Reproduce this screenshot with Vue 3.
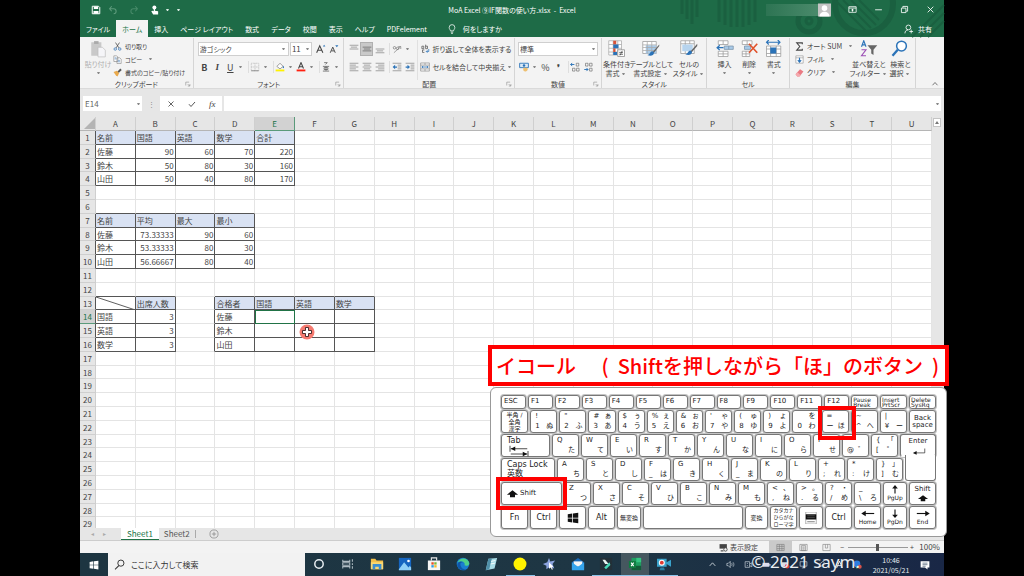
<script setup>
const icons = {
  save: '<path d="M2 2h10l2 2v10H2z" fill="none" stroke="#fff" stroke-width="1.6"/><path d="M4.500 2.500h7v4h-7zM4 9.500h8V14H4z" fill="#fff"/>',
  undo: '<path d="M6 2L2.500 6 6 10M3 6h6a4 4 0 0 1 0 8" fill="none" stroke="#5d9b7c" stroke-width="1.7"/>',
  redo: '<path d="M10 2l3.500 4L10 10M13 6H7a4 4 0 0 0 0 8" fill="none" stroke="#478a69" stroke-width="1.7"/>',
  touch: '<circle cx="7" cy="4" r="3.200" fill="#fff"/><path d="M6 4h2v5l5 1v5H5l-3-5 2-1 2 1z" fill="#fff"/>',
  bulb: '<path d="M5.500 11C5.500 9 3.500 8.500 3.500 5.500a4.500 4.500 0 0 1 9 0c0 3-2 3.500-2 5.500zM6 13h4M6.500 15h3" fill="none" stroke="#fff" stroke-width="1.200"/>',
  share: '<circle cx="7" cy="5.500" r="3.800" fill="none" stroke="#fff" stroke-width="1.300"/><path d="M1.500 15c0-3.500 2-5.500 5-5.500M11.500 9v6M8.500 12h6" fill="none" stroke="#fff" stroke-width="1.300"/>',
  ribbonOpt: '<path d="M1.500 3h13v10h-13zM1.500 5.500h13" fill="none" stroke="#fff" stroke-width="1.400"/><path d="M8 6.500l3 3H9v2H7v-2H5z" fill="#fff"/>',
  min: '<path d="M2 8.500h12" stroke="#fff" stroke-width="1.500"/>',
  restore: '<path d="M2.500 5.500h8v8h-8zM5 5V2.500h8.500V11H11" fill="none" stroke="#fff" stroke-width="1.500"/>',
  close: '<path d="M3 3l10 10M13 3L3 13" stroke="#fff" stroke-width="1.500"/>',
  paste: '<path d="M2 2h9v12H2z" fill="#c9c9c9"/><path d="M4.500 1h4v2.500h-4z" fill="#aaa"/><path d="M8 6.500h4l2.500 2.500v6H8z" fill="#f5f5f8" stroke="#bbb" stroke-width=".6"/>',
  cut: '<path d="M4.500 1l6 9.500M11.500 1l-6 9.500" stroke="#444" stroke-width="1.300"/><circle cx="4" cy="12.500" r="2.200" fill="none" stroke="#3b78b8" stroke-width="1.400"/><circle cx="12" cy="12.500" r="2.200" fill="none" stroke="#3b78b8" stroke-width="1.400"/>',
  copy: '<path d="M1.500 1.500h5l2 2v8h-7zM7 5h5l2.500 2.500V15H7z" fill="#fff" stroke="#777"/><path d="M3 5h3M3 7h3M8.500 9.500h4M8.500 12h4" stroke="#3b78b8"/>',
  brush: '<path d="M1 7l6-2 4 4-3 6-3-2z" fill="#e9a94b"/><path d="M8 6l5-5 2.500 2.500-5 5z" fill="#555"/>',
  grow: '<path d="M1 14L6 3l5 11M3 10h6" fill="none" stroke="#444" stroke-width="1.700"/><path d="M11 4l2-3 2 3z" fill="#2b73b8"/>',
  shrink: '<path d="M2 14L6 5l4 9M4 11h4" fill="none" stroke="#444" stroke-width="1.500"/><path d="M10 2h5l-2.500 3z" fill="#2b73b8"/>',
  border: '<path d="M2 2h12v12H2zM8 2v12M2 8h12" fill="none" stroke="#aaa" stroke-dasharray="1.500 1"/><path d="M2 14h12" stroke="#666"/>',
  bucket: '<path d="M3 7l5-5 5 5-5 4z" fill="#fff" stroke="#666"/><path d="M13 6c2 2 1.500 4 .5 4S12 8 13 6z" fill="#2b73b8"/><path d="M1 12h14v3H1z" fill="#fff200"/>',
  fontColor: '<path d="M4 10.500L8 1l4 9.500M5.500 7.500h5" fill="none" stroke="#444" stroke-width="1.700"/><path d="M1 12h14v3H1z" fill="#ff2010"/>',
  ruby: '<path d="M5 1h5L7 4M3 7h10M5 9h6v3H5zM3 14.500h10M8 7v7" fill="none" stroke="#555" stroke-width="1.200"/>',
  alTop: '<path d="M1 2h14M3 5h10M1 8h14" stroke="#888" stroke-width="1.200"/>',
  alMid: '<path d="M1 5h14M3 8h10M1 11h14" stroke="#666" stroke-width="1.200"/>',
  alBot: '<path d="M1 8h14M3 11h10M1 14h14" stroke="#888" stroke-width="1.200"/>',
  left: '<path d="M1 2h14M1 5h10M1 8h14M1 11h10M1 14h14" stroke="#888" stroke-width="1.200"/>',
  center: '<path d="M1 2h14M3 5h10M1 8h14M3 11h10M1 14h14" stroke="#888" stroke-width="1.200"/>',
  right: '<path d="M1 2h14M5 5h10M1 8h14M5 11h10M1 14h14" stroke="#888" stroke-width="1.200"/>',
  orient: '<path d="M3 14L14 4M10 4h4v4" fill="none" stroke="#888" stroke-width="1.200"/><circle cx="4" cy="6" r="2" fill="none" stroke="#666"/><circle cx="9" cy="7" r="2" fill="none" stroke="#666"/>',
  outdent: '<path d="M1 2h14M9 5h6M9 8h6M9 11h6M1 14h14" stroke="#888" stroke-width="1.200"/><path d="M1 8l4-3.500V7h3v2H5v2.500z" fill="#2b73b8"/>',
  indent: '<path d="M1 2h14M9 5h6M9 8h6M9 11h6M1 14h14" stroke="#888" stroke-width="1.200"/><path d="M8 8L4 4.500V7H1v2h3v2.500z" fill="#2b73b8"/>',
  wrap: '<path d="M3 3.500h3v4H3zM9 1v6.500h3v-4H9M7 9.500H4v4h3" fill="none" stroke="#555" stroke-width="1.200"/><path d="M14 8v4h-4l2-2m-2 2l2 2" fill="none" stroke="#2b73b8" stroke-width="1.200"/>',
  merge: '<path d="M1 1.500h14v13H1zM1 5h14M1 11h14M8 1.500V5M8 11v3.500" fill="none" stroke="#888"/><path d="M3 8h10M5 6.500L3 8l2 1.500M11 6.500L13 8l-2 1.500" fill="none" stroke="#2b73b8" stroke-width="1.200"/>',
  money: '<path d="M1 2h14v7H1z" fill="#dceaf6" stroke="#2b73b8" stroke-width="1.400"/><circle cx="8" cy="5.500" r="2" fill="#2b73b8"/><path d="M7 9h6c2 2 1 5-2 6-3 0-5-1-4-6z" fill="#eec071"/>',
  decInc: '<path d="M1 4h6M3.500 1.500L1 4l2.500 2.500" stroke="#2b73b8" fill="none" stroke-width="1.500"/><path d="M10 2h4v4.500h-4zM4 10h4v4.500H4zM10.500 10h4v4.500h-4z" fill="none" stroke="#666"/>',
  decDec: '<path d="M2 12h6M5.500 9.500L8 12l-2.500 2.500" stroke="#2b73b8" fill="none" stroke-width="1.500"/><path d="M4 2h4v4.500H4zM10.500 2h4v4.500h-4zM10.500 10h4v4.500h-4z" fill="none" stroke="#666"/>',
  cond: '<path d="M1 1h17v19H1zM1 6h17M1 11h17M1 16h17M7 1v19M13 1v19" fill="#fff" stroke="#aaa"/><path d="M7 1h4v5H7zM7 11h3v5H7z" fill="#d8543a"/><path d="M7 6h7v5H7zM7 16h5v4H7z" fill="#2b73b8"/><path d="M13 13h9v9h-9z" fill="#fff" stroke="#888"/><path d="M15 16.500h5M15 19h5M19 14.500l-3 6" stroke="#444"/>',
  tbl: '<path d="M1 2h18v16H1z" fill="#fff" stroke="#999"/><path d="M5 7h14v11H5z" fill="#a9cbe9"/><path d="M1 6.500h18M1 10h18M1 14h18M7 2v16M13 2v16" stroke="#aaa"/><path d="M23 6l-8 9-2 3 3-1 7-9z" fill="#666"/><path d="M14 15c-4 1-3 4-7 5 4 2 9 1 9-3z" fill="#2b73b8"/>',
  cellst: '<path d="M1 1h18v17H1zM1 5h18M7 1v17M13 1v4" fill="#fff" stroke="#999"/><path d="M3 6h14v9H3z" fill="#b7d4ee"/><path d="M23 5l-8 9-2 4 3-2 7-8z" fill="#666"/><path d="M14 14c-4 1-3 4-7 5 4 2 9 1 9-3z" fill="#2b73b8"/>',
  ins: '<path d="M3 1h13v5H3zM9.500 1v5M3 15h13v7H3zM9.500 15v7M3 18.500h13" fill="#fff" stroke="#999"/><path d="M11 8h12v4.500H11zM17 8v4.500" fill="#a9cbe9" stroke="#7b93a8"/><path d="M10 10.300H2M5 7l-3.500 3.300L5 13.500" fill="none" stroke="#2b73b8" stroke-width="1.700"/>',
  del: '<path d="M3 1h13v5H3zM9.500 1v5M3 15h10v7H3zM8 15v7M3 18.500h10" fill="#fff" stroke="#999"/><path d="M6 8h8v4.500H6z" fill="#a9cbe9" stroke="#7b93a8"/><path d="M12 5l11 12M23 5L12 17" stroke="#e0532c" stroke-width="2.200"/>',
  fmt: '<path d="M2 3h18M5 0L2 3l3 3M17 0l3 3-3 3" fill="none" stroke="#2b73b8" stroke-width="1.500"/><path d="M2 8h19v14H2zM7.500 8v14M15 8v14M2 12h19M2 18h19" fill="#fff" stroke="#999"/><path d="M7 10h8v8H7z" fill="#2b73b8"/>',
  sigma: '<path d="M13 4V1.500H3L8.500 8 3 14.500h10V12" fill="none" stroke="#444" stroke-width="1.900"/>',
  fill: '<path d="M1.500 1.500h13v13h-13zM1.500 5h13" fill="#fff" stroke="#888"/><path d="M8 5v7M5 9l3 3.500L11 9" fill="none" stroke="#2b73b8" stroke-width="2"/>',
  eraser: '<path d="M1 11L9 2l6 4-7 9H4z" fill="#ea7a83"/><path d="M1 11l3-3.500 6 5L8 15H4z" fill="#f5a9ae"/>',
  sort: '<path d="M2 9l3-8 3 8M3 6.500h4" fill="none" stroke="#2b73b8" stroke-width="1.500"/><path d="M2 13h6l-6 8h6" fill="none" stroke="#9b4fb5" stroke-width="1.500"/><path d="M10 7h13l-5 6v7l-3-2v-5z" fill="#666"/>',
  find: '<circle cx="14" cy="8" r="6.500" fill="#fff" stroke="#2b73b8" stroke-width="2"/><path d="M9 13l-7 8" stroke="#2b73b8" stroke-width="3"/>',
  cross: '<path d="M3 3l10 10M13 3L3 13" stroke="#555" stroke-width="1.800"/>',
  check: '<path d="M2 8.500l4 4.500 8-9" fill="none" stroke="#555" stroke-width="2"/>',
  launcher: '<path d="M2 12V3h9M7 8l5 5M13 8v5.500H7.500" fill="none" stroke="#777" stroke-width="1.300"/>',
  gear: '<path d="M1 2h13v8H1z" fill="#444"/><path d="M3 14h5" stroke="#444" stroke-width="2"/><circle cx="11.500" cy="11.500" r="3" fill="#f3f3f3" stroke="#444" stroke-width="1.500"/>',
  vNormal: '<path d="M1.500 2.500h13v11h-13zM1.500 6h13M1.500 10h13M6 2.500v11M10.500 2.500v11" fill="none" stroke="#777"/>',
  vPage: '<path d="M1.500 2.500h13v11h-13zM4.500 4.500h7v9h-7zM6 7h4M6 9h4M6 11h4" fill="none" stroke="#777"/>',
  vBreak: '<path d="M1.500 13.500v-11h13v11zM6 2.500V9h4V2.500" fill="none" stroke="#777"/>',
  win: '<path d="M1 3l6-1v5.600H1zM8 1.900L15 1v6.600H8zM1 8.500h6V14l-6-1zM8 8.500h7V15l-7-1z" fill="#fff"/>',
  winBlack: '<path d="M1 3l6-1v5.600H1zM8 1.900L15 1v6.600H8zM1 8.500h6V14l-6-1zM8 8.500h7V15l-7-1z" fill="#111"/>',
  mag: '<circle cx="10" cy="6" r="4.500" fill="none" stroke="#333" stroke-width="1.400"/><path d="M7 9.500L1.500 15" stroke="#333" stroke-width="1.500"/>',
  up: '<path d="M3 10.500L8 5l5 5.500" fill="none" stroke="currentColor" stroke-width="1.400"/>',
  speaker: '<path d="M1.500 6H4l3.500-3.500v11L4 10H1.500zM10 5.500c1 1.500 1 3.500 0 5M12.500 4c2 2.500 2 5.500 0 8" fill="none" stroke="#ccd5dc" stroke-width="1.200"/>',
  cam: '<path d="M2 3h8v10H2zM10 7l4-2v7l-4-2M5 6h2M5 10h2" fill="none" stroke="#ccd5dc" stroke-width="1.200"/>',
  batt: '<path d="M1 5h12v7H1z" fill="#dde"/><path d="M13 7h2v3h-2z" fill="#dde"/>',
  alert: '<path d="M1 4h11v8H1z" fill="#d8dce4"/><circle cx="11" cy="11" r="4" fill="#e23b3b"/>',
  net: '<path d="M2 3h12v8H2zM5 14h6M8 11v3" fill="none" stroke="#ccd5dc" stroke-width="1.200"/>',
  pen: '<path d="M3 13l2-6 6-5 2 3-5 6zM3 13l3-3" fill="none" stroke="#ccd5dc" stroke-width="1.200"/>',
  ime: '<path d="M3 14L8 2l5 12M4.500 10h7" fill="none" stroke="#fff" stroke-width="1.500"/>',
  globe: '<circle cx="7" cy="7" r="6" fill="#2d7de0"/><circle cx="12" cy="12" r="3.500" fill="#d9534a"/><path d="M5 11l5 3-4 1z" fill="#5bb85b"/>',
  note: '<path d="M1 2h14v10h-3v3l-4-3H1z" fill="#fff"/><path d="M4 5h8M4 7.500h8M4 10h5" stroke="#29405a"/>',
}
const apps = [
  '<circle cx="8" cy="8" r="4.800" fill="none" stroke="#e8eef2" stroke-width="1.700"/>',
  '<path d="M2 3v2h8V3M2 13v-2h8v2M2 6.500h8v3H2zM13 2.500v3M13 7v2M13 10.500v3" fill="none" stroke="#aebbc2" stroke-width="1.200"/>',
  '<path d="M1 2h5l1.500 2H15v10H1z" fill="#f4c04a"/><path d="M1 6h14v8H1z" fill="#fbd873"/><path d="M3 8h10v6h-3v-3H6v3H3z" fill="#3c8ed0"/>',
  '<path d="M1 1h14v14H1z" fill="#1565c0"/><path d="M1 14L7 6l5 6 1.500-2L15 12v3H1z" fill="#8fd0f7"/><circle cx="12" cy="4.500" r="1.500" fill="#fff"/>',
  '<path d="M5 4V1h6v3" fill="none" stroke="#e8e8e8" stroke-width="1.300"/><path d="M1 4h14v11H1z" fill="#f5f5f5"/><path d="M5 6h2.700v2.700H5z" fill="#e5502a"/><path d="M8.300 6H11v2.700H8.300z" fill="#7bb93a"/><path d="M5 9.300h2.700V12H5z" fill="#2f9de0"/><path d="M8.300 9.300H11V12H8.300z" fill="#f6b92c"/>',
  '<circle cx="8" cy="8" r="7.200" fill="#1a7fd0"/><path d="M2 6C4 0 14 0 15.200 7c0 3-4 3.500-5.500 2.500C11 7 8 4.500 5 5.500z" fill="#4ed08a"/><path d="M5 8c0 4 3 6.500 7 6.500C9 16 3 15 1.500 10 1 6 5 4 8 6 6 6 5 7 5 8z" fill="#0f57a8"/>',
  '<path d="M5 2l10-1-3 12-10 2z" fill="#a9dce6"/><path d="M5 2l4 0-3 12-4 1z" fill="#4f8fa8"/><path d="M8 5l5-1M7.500 8l5-1" stroke="#fff"/>',
  '<circle cx="8" cy="8" r="7.400" fill="#fff200"/>',
  '<path d="M8 1l1.500 4L15 4l-3 4 2 5-5-2-4 3v-4L1 8l5-2z" fill="#8da5e0"/><path d="M8 6l5 5-2 .3L12.500 14l-1.200.6L10 12l-2 1.500z" fill="#fff"/>',
  '<path d="M1 6l7-5 7 5v8H1z" fill="#1769b8"/><path d="M3 5h10v6H3z" fill="#f5f5f5"/><path d="M1 6l7 5 7-5v9H1z" fill="#35a4ec"/>',
  '<path d="M1 1h14v14H1z" fill="#233038"/><path d="M4 3h3l4 5H7z" fill="#e9f5f2"/><path d="M6 12l6-6 1 3-5 5z" fill="#49d8b8"/>',
  '<path d="M4 1h11v14H4z" fill="#1f9d60"/><path d="M9.500 1H15v5H9.500z" fill="#35c481"/><path d="M4 10h11v5H4z" fill="#135c38"/><path d="M1 4.500h8v8H1z" fill="#107c41"/><path d="M3.500 6.500l3 4M6.500 6.500l-3 4" stroke="#fff" stroke-width="1.200"/>',
  '<path d="M0 2h11v9H0zM11 6l5-3v8l-5-3z" fill="#3aa3cc"/><circle cx="5.500" cy="6.500" r="3.400" fill="#fff"/><circle cx="5.500" cy="6.500" r="2.200" fill="#e03a32"/><path d="M4 12h4l1 3H3z" fill="#2a7c9e"/>',
]
const menu = ['挿入', 'ページ レイアウト', '数式', 'データ', '校閲', '表示', 'ヘルプ', 'PDFelement']

const letters = 'ABCDEFGHIJKLMNOPQRSTU'.split('')
const texts = {
  1: ['名前', '国語', '英語', '数学', '合計'],
  2: ['佐藤', 90, 60, 70, 220],
  3: ['鈴木', 50, 80, 30, 160],
  4: ['山田', 50, 40, 80, 170],
  7: ['名前', '平均', '最大', '最小'],
  8: ['佐藤', 73.33333, 90, 60],
  9: ['鈴木', 53.33333, 80, 30],
  10: ['山田', 56.66667, 80, 40],
  13: ['', '出席人数', '', '合格者', '国語', '英語', '数学'],
  14: ['国語', 3, '', '佐藤'],
  15: ['英語', 3, '', '鈴木'],
  16: ['数学', 3, '', '山田'],
}
const boxes = [[1, 4, 0, 4], [7, 10, 0, 3], [13, 16, 0, 1], [13, 16, 3, 6]]
const boxed = (r, c) => boxes.some(([a, b, l, h]) => r >= a && r <= b && c >= l && c <= h)
const headRow = (r, c) => [1, 7, 13].includes(r) && boxed(r, c) && !(r === 13 && c === 0)
const rows = Array.from({ length: 29 }, (_, i) => {
  const r = i + 1
  return {
    r,
    headCls: { cur: r === 14, dr: boxed(r, 0) },
    cells: letters.map((_, c) => {
      const v = (texts[r] || [])[c] ?? ''
      return {
        v,
        cls: {
          num: typeof v === 'number',
          hd: headRow(r, c),
          dr: boxed(r, c) || boxed(r, c + 1),
          db: boxed(r, c) || boxed(r + 1, c),
          active: r === 14 && c === 4,
          diag: r === 13 && c === 0,
        },
      }
    }),
  }
})

const k = (w, ...t) => ({ w, t })
const l = (a, d) => k(27, a, '', '', d)
const fk = n => ({ w: 25, lab: n, c: 'fn' })
const keyRows = [
  [fk('ESC'), ...Array.from({ length: 12 }, (_, i) => fk('F' + (i + 1))),
    { w: 27, lab: 'Pause\nBreak', c: 'fn two' }, { w: 27, lab: 'Insert\nPrtScr', c: 'fn two' }, { w: 27, lab: 'Delete\nSysRq', c: 'fn two' }],
  [{ w: 27, lab: '半角 /\n全角\n漢字', c: 'jp' }, k(27, '!', '', '1', 'ぬ'), k(27, '"', '', '2', 'ふ'), k(27, '#', 'ぁ', '3', 'あ'),
    k(27, '$', 'ぅ', '4', 'う'), k(27, '%', 'ぇ', '5', 'え'), k(27, '&', 'ぉ', '6', 'お'), k(27, "'", 'ゃ', '7', 'や'),
    k(27, '(', 'ゅ', '8', 'ゆ'), k(27, ')', 'ょ', '9', 'よ'), k(27, '', 'を', '0', 'わ'), { ...k(27, '=', '', 'ー', 'ほ'), c: 'mark eq' },
    k(27, '~', '', '^', 'へ'), k(27, '|', '', '¥', 'ー'), { w: 27, lab: 'Back\nspace', c: 'mid2' }],
  [{ w: 49, lab: 'Tab', c: 'word', art: 'tab' }, l('Q', 'た'), l('W', 'て'), l('E', 'い'), l('R', 'す'), l('T', 'か'), l('Y', 'ん'),
    l('U', 'な'), l('I', 'に'), l('O', 'ら'), l('P', 'せ'), k(27, '', '', '@', '゛'), k(27, '{', '「', '[', '゜'), { w: 36, lab: 'Enter', c: 'enterTop', art: 'enter' }],
  [{ w: 54, lab: 'Caps Lock\n英数', c: 'word caps' }, l('A', 'ち'), l('S', 'と'), l('D', 'し'), k(27, 'F', '', '_', 'は'), l('G', 'き'), l('H', 'く'),
    k(27, 'J', '', '_', 'ま'), l('K', 'の'), l('L', 'り'), k(27, '+', '', ';', 'れ'), k(27, '*', '', ':', 'け'), k(27, '}', '」', ']', 'む'), { w: 31, lab: '', c: 'enterBot' }],
  [{ w: 61, lab: 'Shift', c: 'mark shift', art: 'shift' }, l('Z', 'つ'), l('X', 'さ'), l('C', 'そ'), l('V', 'ひ'), l('B', 'こ'), l('N', 'み'), l('M', 'も'),
    k(27, '<', '、', ',', 'ね'), k(27, '>', '。', '.', 'る'), k(27, '?', '・', '/', 'め'), k(27, '_', '', '\\', 'ろ'),
    { w: 24, lab: 'PgUp', c: 'nav', art: 'aup' }, { w: 27, lab: 'Shift', c: 'shiftR', art: 'shift' }],
  [{ w: 27, lab: 'Fn', c: 'mid' }, { w: 27, lab: 'Ctrl', c: 'mid' }, { w: 27, lab: '', c: 'mid', art: 'win' }, { w: 27, lab: 'Alt', c: 'mid' },
    { w: 24, lab: '無変換', c: 'jp' }, { w: 100, lab: '', c: 'mid' }, { w: 23, lab: '変換', c: 'jp' }, { w: 27, lab: 'カタカナ\nひらがな\nローマ字', c: 'jp tiny' },
    { w: 24, lab: '', c: 'mid', art: 'menu' }, { w: 27, lab: 'Ctrl', c: 'mid' }, { w: 27, lab: 'Home', c: 'nav', art: 'aleft' },
    { w: 24, lab: 'PgDn', c: 'nav', art: 'adown' }, { w: 27, lab: 'End', c: 'nav', art: 'aright' }],
]
const art = {
  tab: '<path d="M0 1v8M1 5h22M24 8v7M1 12h22" stroke="#111" fill="none"/><path d="M1 5l6-3v6zM23 12l-6-3v6z" fill="#111"/>',
  enter: '<path d="M22 4v7H6" stroke="#111" fill="none"/><path d="M3 11l6-3v6z" fill="#111"/>',
  shift: '<path d="M12 2l9 7h-5v4H8V9H3z" fill="#111"/>',
  aup: '<path d="M12 15V3" stroke="#111" stroke-width="2"/><path d="M7 6l5-6 5 6z" fill="#111"/>',
  adown: '<path d="M12 1v12" stroke="#111" stroke-width="2"/><path d="M7 10l5 6 5-6z" fill="#111"/>',
  aleft: '<path d="M4 8h19" stroke="#111" stroke-width="2"/><path d="M8 3L0 8l8 5z" fill="#111"/>',
  aright: '<path d="M1 8h19" stroke="#111" stroke-width="2"/><path d="M16 3l8 5-8 5z" fill="#111"/>',
  win: '<g transform="translate(4 0)">' + icons.winBlack + '</g>',
  menu: '<path d="M5 0h14v16H5z" fill="#fff" stroke="#999"/><path d="M5 3h14v7H5z" fill="#111"/><path d="M7 5h10M7 7.500h10" stroke="#888" stroke-width=".6"/><path d="M7 13h10" stroke="#555"/>',
}
</script>

<template>
  <div class="stage">
    <main class="excel">
      <header class="top">
        <svg class="decor" viewBox="0 0 260 37">
          <g stroke="#1a6040" fill="none">
            <path d="M-2 0v14M3 0v19M8 0v24M13 0v17M35 0v22M41 0v25M47 0v27M53 0v27M59 0v27M65 0v25M71 0v22" stroke-width="3" />
            <circle cx="125" cy="21" r="11" stroke-width="5" /><circle cx="125" cy="21" r="3" stroke-width="3" />
            <circle cx="180" cy="4" r="29" stroke-width="6" />
            <path d="M151 0l31 31M159 0l28 28M167 0l25 25M175 0l20 20M228 37l32-32M236 37l24-24M244 37l16-16" stroke-width="2" />
          </g>
        </svg>
        <div class="title">
          <div class="qat">
            <button aria-label="上書き保存"><svg viewBox="0 0 16 16" v-html="icons.save" /></button>
            <button aria-label="元に戻す"><svg viewBox="0 0 16 16" v-html="icons.undo" /></button>
            <button aria-label="やり直し"><svg viewBox="0 0 16 16" v-html="icons.redo" /></button>
            <button aria-label="タッチ"><svg viewBox="0 0 16 16" v-html="icons.touch" /></button>
            <i class="car lt" /><i class="car lt" />
          </div>
          <div class="name">MoA Excel ⑨IF関数の使い方.xlsx&nbsp; -&nbsp; Excel</div>
          <div class="wctl">
            <span class="user" />
            <svg class="avatar" viewBox="0 0 14 14"><path d="M0 0h14v14H0z" fill="#c4c4c4" /><circle cx="7" cy="5" r="3" fill="#fff" /><path d="M1.500 14c0-7 11-7 11 0z" fill="#fff" /></svg>
            <button v-for="n in ['ribbonOpt', 'min', 'restore', 'close']" :key="n" :aria-label="n"><svg viewBox="0 0 16 16" v-html="icons[n]" /></button>
          </div>
        </div>
        <nav class="tabs">
          <button>ファイル</button>
          <button class="on">ホーム</button>
          <button v-for="m in menu" :key="m">{{ m }}</button>
          <button class="tell"><svg viewBox="0 0 16 16" v-html="icons.bulb" />何をしますか</button>
          <button class="share"><svg viewBox="0 0 16 16" v-html="icons.share" />共有</button>
        </nav>
      </header>

      <section class="ribbon">
        <div class="grp clip">
          <div class="body">
            <button class="big dim"><svg viewBox="0 0 16 16" v-html="icons.paste" /><span>貼り付け</span><i class="car" /></button>
            <div class="stack">
              <button><svg viewBox="0 0 16 16" v-html="icons.cut" />切り取り</button>
              <button><svg viewBox="0 0 16 16" v-html="icons.copy" />コピー<i class="car" /></button>
              <button><svg viewBox="0 0 16 16" v-html="icons.brush" />書式のコピー/貼り付け</button>
            </div>
          </div>
          <div class="cap">クリップボード<svg viewBox="0 0 16 16" v-html="icons.launcher" /></div>
        </div>
        <div class="grp font">
          <div class="body col">
            <div class="line">
              <span class="sel wide"><select aria-label="フォント"><option>游ゴシック</option></select><i class="car" /></span>
              <span class="sel size"><select aria-label="サイズ"><option>11</option></select><i class="car" /></span>
              <button class="sq" aria-label="拡大"><svg viewBox="0 0 16 16" v-html="icons.grow" /></button>
              <button class="sq" aria-label="縮小"><svg viewBox="0 0 16 16" v-html="icons.shrink" /></button>
            </div>
            <div class="line">
              <button class="sq"><b>B</b></button><button class="sq"><em>I</em></button><button class="sq"><u>U</u></button><i class="car" /><i class="sep" />
              <button class="sq" aria-label="罫線"><svg viewBox="0 0 16 16" v-html="icons.border" /></button><i class="car" /><i class="sep" />
              <button class="sq" aria-label="塗りつぶし"><svg viewBox="0 0 16 16" v-html="icons.bucket" /></button><i class="car" />
              <button class="sq" aria-label="文字色"><svg viewBox="0 0 16 16" v-html="icons.fontColor" /></button><i class="car" /><i class="sep" />
              <button class="sq" aria-label="ふりがな"><svg viewBox="0 0 16 16" v-html="icons.ruby" /></button><i class="car" />
            </div>
          </div>
          <div class="cap">フォント<svg viewBox="0 0 16 16" v-html="icons.launcher" /></div>
        </div>
        <div class="grp align">
          <div class="body">
            <div class="col left">
              <div class="line">
                <button class="sq" aria-label="上揃え"><svg viewBox="0 0 16 16" v-html="icons.alTop" /></button>
                <button class="sq sel-on" aria-label="上下中央"><svg viewBox="0 0 16 16" v-html="icons.alMid" /></button>
                <button class="sq" aria-label="下揃え"><svg viewBox="0 0 16 16" v-html="icons.alBot" /></button><i class="sep" />
                <button class="sq" aria-label="方向"><svg viewBox="0 0 16 16" v-html="icons.orient" /></button><i class="car" />
              </div>
              <div class="line">
                <button v-for="n in ['left', 'center', 'right']" :key="n" class="sq" :aria-label="n"><svg viewBox="0 0 16 16" v-html="icons[n]" /></button><i class="sep" />
                <button v-for="n in ['outdent', 'indent']" :key="n" class="sq" :aria-label="n"><svg viewBox="0 0 16 16" v-html="icons[n]" /></button>
              </div>
            </div>
            <div class="col rest">
              <div class="line"><button class="txt"><svg viewBox="0 0 16 16" v-html="icons.wrap" />折り返して全体を表示する</button></div>
              <div class="line"><button class="txt"><svg viewBox="0 0 16 16" v-html="icons.merge" />セルを結合して中央揃え</button><i class="car" /></div>
            </div>
          </div>
          <div class="cap">配置<svg viewBox="0 0 16 16" v-html="icons.launcher" /></div>
        </div>
        <div class="grp number">
          <div class="body col">
            <div class="line"><span class="sel full"><select aria-label="表示形式"><option>標準</option></select><i class="car" /></span></div>
            <div class="line">
              <button class="sq" aria-label="通貨"><svg viewBox="0 0 16 16" v-html="icons.money" /></button><i class="car" />
              <button class="sq">%</button><button class="sq"><b>❜</b></button><i class="sep" />
              <button class="sq" aria-label="桁増"><svg viewBox="0 0 16 16" v-html="icons.decInc" /></button>
              <button class="sq" aria-label="桁減"><svg viewBox="0 0 16 16" v-html="icons.decDec" /></button>
            </div>
          </div>
          <div class="cap">数値<svg viewBox="0 0 16 16" v-html="icons.launcher" /></div>
        </div>
        <div class="grp style">
          <div class="body">
            <button class="big"><svg viewBox="0 0 24 24" v-html="icons.cond" /><span>条件付き</span><span>書式<i class="car" /></span></button>
            <button class="big"><svg viewBox="0 0 24 24" v-html="icons.tbl" /><span>テーブルとして</span><span>書式設定<i class="car" /></span></button>
            <button class="big"><svg viewBox="0 0 24 24" v-html="icons.cellst" /><span>セルの</span><span>スタイル<i class="car" /></span></button>
          </div>
          <div class="cap">スタイル</div>
        </div>
        <div class="grp cell">
          <div class="body">
            <button class="big"><svg viewBox="0 0 24 24" v-html="icons.ins" /><span>挿入</span><i class="car" /></button>
            <button class="big"><svg viewBox="0 0 24 24" v-html="icons.del" /><span>削除</span><i class="car" /></button>
            <button class="big"><svg viewBox="0 0 24 24" v-html="icons.fmt" /><span>書式</span><i class="car" /></button>
          </div>
          <div class="cap">セル</div>
        </div>
        <div class="grp edit">
          <div class="body">
            <div class="stack">
              <button><svg viewBox="0 0 16 16" v-html="icons.sigma" />オート SUM<i class="car" /></button>
              <button><svg viewBox="0 0 16 16" v-html="icons.fill" />フィル<i class="car" /></button>
              <button><svg viewBox="0 0 16 16" v-html="icons.eraser" />クリア<i class="car" /></button>
            </div>
            <button class="big"><svg viewBox="0 0 24 24" v-html="icons.sort" /><span>並べ替えと</span><span>フィルター<i class="car" /></span></button>
            <button class="big"><svg viewBox="0 0 24 24" v-html="icons.find" /><span>検索と</span><span>選択<i class="car" /></span></button>
          </div>
          <div class="cap">編集</div>
        </div>
        <button class="collapse" aria-label="折りたたむ"><svg viewBox="0 0 16 16" v-html="icons.up" /></button>
      </section>

      <section class="fbar">
        <span class="nbox"><input aria-label="名前ボックス" value="E14"><i class="car" /></span>
        <span class="dots">⋮</span>
        <span class="fbtn">
          <button aria-label="取消"><svg viewBox="0 0 16 16" v-html="icons.cross" /></button>
          <button aria-label="入力"><svg viewBox="0 0 16 16" v-html="icons.check" /></button>
          <button class="fx">fx</button>
        </span>
        <span class="formula"><input aria-label="数式"><i class="car" /></span>
      </section>

      <section class="sheet">
        <table>
          <thead>
            <tr>
              <th class="corner"><svg viewBox="0 0 10 10"><path d="M10 0v10H0z" fill="#b4b4b4" /></svg></th>
              <th v-for="(c, i) in letters" :key="c" :class="{ cur: i === 4 }">{{ c }}</th>
            </tr>
          </thead>
          <tbody>
            <tr v-for="row in rows" :key="row.r">
              <th :class="row.headCls">{{ row.r }}</th>
              <td v-for="(c, i) in row.cells" :key="i" :class="c.cls">{{ c.v }}<svg v-if="c.cls.diag" viewBox="0 0 40 14" preserveAspectRatio="none"><path d="M0 0l40 14" stroke="#555" stroke-width="1" /></svg></td>
            </tr>
          </tbody>
        </table>
        <div class="vscroll"><i /></div>
        <svg class="pointer" viewBox="0 0 16 16"><circle cx="8" cy="8" r="7.500" fill="#f57a70" /><path d="M6.500 3.500h3v3h3v3h-3v3h-3v-3h-3v-3h3z" fill="#fff" stroke="#3a2020" stroke-width=".9" /></svg>
      </section>

      <section class="stabs">
        <span class="arr">◂</span><span class="arr">▸</span>
        <button class="on">Sheet1</button><button>Sheet2</button><i class="bar" />
        <button class="add" aria-label="シート追加"><svg viewBox="0 0 16 16"><circle cx="8" cy="8" r="6.500" fill="none" stroke="#777" /><path d="M8 4.500v7M4.500 8h7" stroke="#777" /></svg></button>
      </section>

      <section class="status">
        <button class="disp"><svg viewBox="0 0 16 16" v-html="icons.gear" />表示設定</button>
        <button class="view on" aria-label="標準"><svg viewBox="0 0 16 16" v-html="icons.vNormal" /></button>
        <button class="view" aria-label="ページレイアウト"><svg viewBox="0 0 16 16" v-html="icons.vPage" /></button>
        <button class="view" aria-label="改ページ"><svg viewBox="0 0 16 16" v-html="icons.vBreak" /></button>
        <button class="minus">−</button><input type="range" aria-label="ズーム" min="0" max="100" value="49"><button>+</button>
        <span class="pct">100%</span>
      </section>

      <footer class="task">
        <button class="start" aria-label="スタート"><svg viewBox="0 0 16 16" v-html="icons.win" /></button>
        <label class="search"><svg viewBox="0 0 16 16" v-html="icons.mag" /><input placeholder="ここに入力して検索" aria-label="検索"></label>
        <div class="apps">
          <button v-for="(a, i) in apps" :key="i" :class="{ run: [7, 10, 11, 12].includes(i), act: i === 11 }" :aria-label="'アプリ' + (i + 1)"><svg viewBox="0 0 16 16" v-html="a" /></button>
        </div>
        <div class="tray">
          <svg v-for="n in ['up', 'speaker', 'cam', 'batt', 'alert', 'net', 'pen', 'ime', 'globe']" :key="n" viewBox="0 0 16 16" v-html="icons[n]" />
          <span class="water">© 2021 saym.</span>
        </div>
        <div class="clock"><span>10:46</span><span>2021/05/21</span></div>
        <button class="note" aria-label="通知"><svg viewBox="0 0 16 16" v-html="icons.note" /></button>
      </footer>
    </main>

    <aside class="over">
      <p class="banner"><span>イコール</span><span>(&nbsp; Shiftを押しながら「ほ」のボタン&nbsp; )</span></p>
      <div class="kb">
        <div v-for="(r, i) in keyRows" :key="i" class="krow" :class="{ first: i === 0 }">
          <div v-for="(key, j) in r" :key="j" class="key" :class="key.c" :style="{ flexGrow: key.w, flexBasis: key.w + 'px' }">
            <template v-if="key.t"><span v-for="(t, n) in key.t" :key="n" :class="'p' + n">{{ t }}</span></template>
            <template v-else><span v-if="key.lab" class="lab">{{ key.lab }}</span><svg v-if="key.art" viewBox="0 0 24 16" v-html="art[key.art]" /></template>
          </div>
        </div>
      </div>
    </aside>
  </div>
</template>

<style>
html, body { margin: 0; background: #000; }
</style>

<style scoped>
* { box-sizing: border-box; }
.stage { position: relative; height: 100vh; padding: 0 80px; background: #000; overflow: hidden; font-family: "Noto Sans CJK JP", sans-serif; font-size: 7px; color: #444; }
button, input, select { font: inherit; color: inherit; border: 0; background: none; padding: 0; margin: 0; outline: 0; }
button { display: flex; align-items: center; justify-content: center; white-space: nowrap; }
svg { display: block; flex: none; }
.car { flex: none; width: 8px; height: 8px; display: inline-flex; align-items: center; justify-content: center; }
.car::after { content: ""; border: 1px solid transparent; border-top: 2px solid #888; border-bottom: 0; width: 1px; }
.car.lt::after { border-top-color: #dcebe3; }
.excel { height: 100%; display: flex; flex-direction: column; background: #e6e6e6; font-feature-settings: "palt"; }
.top { position: relative; flex: none; background: #1e6b47; color: #fff; }
.decor { position: absolute; right: 0; top: 0; height: 37px; width: 260px; overflow: visible; }
.title { position: relative; display: grid; grid-template-columns: 1fr auto 1fr; align-items: center; height: 19px; }
.qat { display: flex; align-items: center; padding-left: 11px; gap: 3px; }
.qat svg { width: 10px; height: 10px; }
.qat button:nth-child(2) { margin: 0 8px 0 4px; }
.qat button:nth-child(3) { margin-right: 8px; }
.name { line-height: 18px; }
.wctl { display: flex; align-items: center; justify-content: flex-end; gap: 17px; padding-right: 9px; }
.wctl button svg { width: 9px; height: 9px; }
.user { width: 52px; height: 12px; background: linear-gradient(90deg, #2d7453, #4a8a6b); margin-right: -17px; }
.avatar { width: 13px; height: 14px; }
.tabs { position: relative; display: flex; height: 18px; padding: 1px 0 0; }
.tabs button { padding: 0 6px; }
.tabs .on { background: #f3f3f3; color: #217346; padding: 0 6px; }
.tabs svg { width: 10px; height: 10px; margin-right: 6px; }
.tabs .tell { margin-left: 8px; }
.tabs .share { margin-left: auto; padding-right: 12px; }
.tabs .share svg { margin-right: 4px; }

.ribbon { flex: none; display: flex; height: 52px; background: #f3f3f3; border-bottom: 1px solid #dadada; }
.grp { flex: 1 1 0; min-width: 0; display: flex; flex-direction: column; border-right: 1px solid #d5d5d5; margin: 1px 0 0; padding: 0 3px; }
.clip { flex-grow: 113; } .font { flex-grow: 152; } .align { flex-grow: 173; } .number { flex-grow: 85; }
.style { flex-grow: 108; } .cell { flex-grow: 80; } .edit { flex-grow: 126; }
.body { flex: 1; min-height: 0; display: flex; padding-top: 2px; }
.col { display: flex; flex-direction: column; }
.left { width: 71px; flex: none; border-right: 1px solid #e0e0e0; }
.rest { padding-left: 2px; }
.cap { position: relative; height: 8px; line-height: 8px; text-align: center; white-space: nowrap; }
.cap svg { position: absolute; right: -1px; top: 1px; width: 6px; height: 6px; }
.line { display: flex; align-items: center; height: 18px; }
.sq { width: 13px; height: 14px; flex: none; font-size: 9px; }
.sq svg { width: 10px; height: 10px; }
.sq em { font-family: "Liberation Serif", serif; font-weight: bold; }
.sel-on { background: #c9c9c9; border: 1px solid #b0b0b0; }
.sep { width: 4px; height: 12px; flex: none; border-right: 1px solid #dedede; }
.sel { display: flex; align-items: center; height: 14px; background: #fff; border: 1px solid #cfcfcf; }
.sel select { appearance: none; flex: 1; min-width: 0; width: 0; padding-left: 1px; line-height: 12px; }
.sel.wide { width: 93px; margin-right: 1px; }
.sel.size { width: 23px; margin-right: 2px; font-size: 8px; }
.sel.full { flex: 1; }
.font .line { padding-left: 1px; }
.txt svg { width: 10px; height: 10px; margin-right: 2px; }
.stack { display: flex; flex-direction: column; justify-content: space-between; height: 38px; }
.clip .stack { font-size: 6px; }
.stack button { justify-content: flex-start; height: 12px; }
.stack svg { width: 9px; height: 9px; margin-right: 3px; }
.stack .car { margin-left: 4px; }
.big { flex: 1 1 auto; min-width: 0; flex-direction: column; justify-content: flex-start; line-height: 9px; }
.big svg { width: 18px; height: 18px; margin-bottom: 2px; }
.big span { display: flex; align-items: center; }
.big.dim { flex: none; width: 30px; color: #b0b0b0; }
.edit .stack { width: 56px; padding-left: 2px; }
.style { padding: 0 1px; }
.cell .body { padding-left: 2px; }
.collapse { flex: none; width: 28px; align-self: flex-end; height: 8px; justify-content: center; }
.collapse svg { width: 8px; height: 8px; margin-left: 10px; }

.fbar { flex: none; display: flex; align-items: center; height: 28px; padding: 1px 3px 0; }
.fbar > span { height: 15px; display: flex; align-items: center; background: #fff; }
.nbox { width: 59px; font-size: 8px; padding-left: 2px; }
.nbox input { flex: 1; min-width: 0; color: #666; }
.fbar .dots { width: 18px; background: none; justify-content: center; color: #888; }
.fbtn { width: 62px; justify-content: space-around; margin-right: 2px; }
.fbtn svg { width: 8px; height: 8px; }
.fx { font: italic 9px "Liberation Serif", serif; }
.formula { flex: 1; }
.formula input { flex: 1; min-width: 0; }

.sheet { position: relative; flex: 1; min-height: 0; display: flex; overflow: hidden; background: #fff; }
table { flex: 1; min-width: 0; display: flex; flex-direction: column; margin-bottom: -3px; font-size: 8px; font-feature-settings: normal; }
thead { display: block; flex: none; }
tbody { flex: 1; min-height: 0; display: flex; flex-direction: column; }
thead tr { display: flex; height: 14px; }
tbody tr { display: flex; flex: 1 1 0; min-height: 0; }
th, td { position: relative; flex: 1 1 0; min-width: 0; padding: 0 1px; line-height: 13px; border: 0 solid #e4e4e4; border-width: 0 1px 1px 0; font-weight: normal; white-space: nowrap; overflow: hidden; text-align: left; }
th { text-align: center; background: #e6e6e6; border-color: #cfcfcf; }
thead th { border-bottom-color: #b5b5b5; }
thead .corner, tbody th { flex: none; width: 16px; padding: 0; }
.corner svg { width: 11px; height: 11px; margin: 1px 0 0 4px; }
.cur { background: #d2d2d2; color: #217346; border-color: #5a9a7a; }
.num { text-align: right; }
.hd { background: #d9e2f3; }
.dr { border-right-color: #555; }
.db { border-bottom-color: #555; }
.active { outline: 1px solid #217346; outline-offset: -1px; overflow: visible; z-index: 1; }
.diag svg { position: absolute; inset: 0; width: 100%; height: 100%; }
.vscroll { flex: none; width: 12px; background: #e6e6e6; padding: 1px 3px 0 1px; }
.vscroll i { display: flex; align-items: center; justify-content: center; height: 9px; background: #fff; border: 1px solid #c4c4c4; }
.vscroll i::after { content: ""; width: 0; border: 2px solid transparent; border-top: 0; border-bottom: 3px solid #777; }
.pointer { position: absolute; left: 219px; top: 207px; width: 16px; height: 16px; }

.stabs { flex: none; display: flex; height: 13px; align-items: stretch; font-size: 8px; padding-left: 6px; border-bottom: 1px solid #cdcdcd; }
.stabs .arr { width: 12px; text-align: center; line-height: 12px; color: #aaa; font-size: 6px; }
.stabs button { padding: 0 5px 1px; color: #555; }
.stabs .on { background: #fff; color: #217346; padding: 0 6px; border-bottom: 1px solid #217346; margin-left: 11px; }
.stabs .bar { width: 1px; margin: 2px 0; background: #aaa; }
.stabs .add { margin-left: 8px; }
.stabs .add svg { width: 10px; height: 10px; }

.status { flex: none; display: flex; align-items: center; justify-content: flex-end; height: 12px; background: #f3f3f3; padding-right: 4px; line-height: 10px; }
.disp svg { width: 9px; height: 9px; margin-right: 2px; }
.disp { margin-right: 11px; }
.view { width: 23px; height: 12px; }
.view svg { width: 9px; height: 9px; }
.view.on { background: #cacaca; }
.minus { width: 8px; }
.status input { appearance: none; width: 60px; height: 8px; margin: 0 2px; background: linear-gradient(#999, #999) center / 100% 1px no-repeat; }
.status input::-webkit-slider-thumb { appearance: none; width: 3px; height: 7px; background: #555; }
.pct { width: 26px; text-align: right; font-size: 8px; }

.task { flex: none; display: flex; height: 23px; color: #e4ebef; background: linear-gradient(90deg, #1d3541, #1e3644 60%, #192746); }
.start { width: 28px; }
.start svg { width: 10px; height: 10px; }
.search { display: flex; align-items: center; width: 197px; background: #f2f2f2; padding-left: 6px; color: #333; }
.search svg { width: 11px; height: 11px; margin-right: 6px; }
.search input { flex: 1; min-width: 0; font-size: 8px; }
.search input::placeholder { color: #333; opacity: 1; }
.apps { display: flex; flex: 0 1 373px; }
.apps button { flex: 1 1 0; border-bottom: 1px solid transparent; }
.apps svg { width: 14px; height: 14px; }
.apps .run { border-bottom: 1px solid #8cc4ea; }
.apps .act { background: #45575f; }
.tray { position: relative; flex: 1; display: flex; align-items: center; justify-content: space-between; padding: 0 8px 0 30px; }
.tray svg { width: 9px; height: 9px; }
.water { position: absolute; right: 10px; top: 0; font: 17px/18px "Noto Sans", sans-serif; color: #e9edf2; white-space: nowrap; }
.clock { flex: none; width: 42px; display: flex; flex-direction: column; justify-content: center; align-items: center; line-height: 10px; }
.note { flex: none; width: 32px; padding-right: 6px; }
.note svg { width: 10px; height: 10px; }

.over { position: absolute; right: 75px; bottom: 39px; width: 461px; color: #222; }
.banner { margin: 0 0 1px; height: 41px; display: flex; align-items: center; justify-content: space-between; padding: 0 6px 0 4px; border: 4px solid #f00; background: #fff; color: #f00; font: 500 20px/32px "Noto Sans CJK JP", sans-serif; white-space: nowrap; }
.kb { margin: 0 2px; height: 150px; padding: 7px 10px; display: flex; flex-direction: column; gap: 1px; background: #fff; border: 1px solid #999; border-radius: 6px; font-family: "DejaVu Sans", "Noto Sans CJK JP", sans-serif; font-size: 7px; }
.krow { display: flex; gap: 2px; height: 23px; }
.krow.first { height: 14px; }
.key { position: relative; flex-shrink: 1; min-width: 0; display: grid; grid-template-columns: 1fr 1fr; grid-template-rows: 1fr 1fr; padding: 1px 3px; border: 1px solid #777; border-radius: 3px; background: #fff; box-shadow: 0 0 0 1px #c4c4c4; line-height: 9px; white-space: pre; }
.p1, .p3 { justify-self: end; }
.p0, .p2 { padding-left: 1px; }
.key .lab { grid-column: 1 / 3; }
.fn { display: block; line-height: 8px; padding: 1px 2px; }
.two { line-height: 5px; font-size: 6px; padding: 1px 0 0 1px; }
.jp, .mid, .mid2, .nav, .shiftR { display: flex; flex-direction: column; align-items: center; justify-content: center; padding: 0; text-align: center; }
.jp { font-size: 6px; line-height: 7px; }
.tiny { font-size: 5px; }
.mid { font-size: 8px; }
.mid2 { line-height: 7px; }
.mid svg { width: 18px; height: 12px; }
.nav { flex-direction: column-reverse; font-size: 6px; line-height: 8px; }
.nav svg, .shiftR svg { width: 14px; height: 9px; }
.word { display: flex; flex-direction: column; font-size: 8px; padding: 1px 5px; }
.word svg { width: 24px; height: 12px; }
.caps { line-height: 9px; }
.shift { display: flex; flex-direction: row-reverse; align-items: center; justify-content: flex-end; }
.shift svg { width: 15px; height: 10px; }
.enterTop { display: flex; flex-direction: column; align-items: center; border-bottom-color: transparent; padding: 2px 0; z-index: 1; }
.enterTop svg { width: 21px; height: 10px; }
.enterBot { margin-top: -3px; border-top: 0; border-radius: 0 0 3px 3px; box-shadow: none; z-index: 2; }
.mark { z-index: 3; }
.mark::after { content: ""; position: absolute; inset: -6px; border: 4px solid #f00; }
.mark.eq::after { inset: -5px -8px -8px -5px; }
</style>
